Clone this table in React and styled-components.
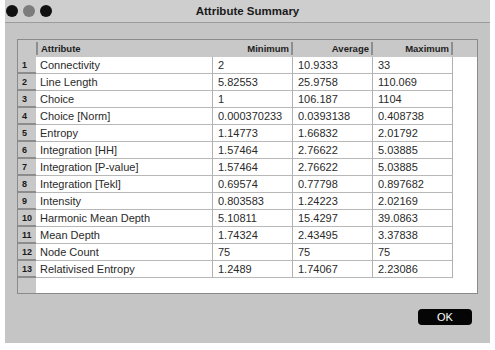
import React from 'react'
import styled, { createGlobalStyle } from 'styled-components'

const GlobalStyle = createGlobalStyle`
  html, body {
    margin: 0;
    padding: 0;
    background: #ffffff;
    font-family: "Liberation Sans", Arial, sans-serif;
  }
`

const Window = styled.div`
  margin-left: 5px;
  width: 485px;
  height: 343px;
  background-color: #c5c5c5;
  display: flex;
  flex-direction: column;
`
const TitleBar = styled.div`
  position: relative;
  height: 22px;
  flex-shrink: 0;
  background-color: #cecece;
  border-bottom: 1px solid #9c9c9c;
  display: flex;
  align-items: center;
  justify-content: center;
`
const Lights = styled.div`
  position: absolute;
  left: 1px;
  top: 5px;
  display: flex;
  gap: 5px;
`
const Light = styled.span`
  width: 12px;
  height: 12px;
  border-radius: 50%;
  background-color: ${p => (p.dim ? '#7c7c7c' : '#111')};
`
const Title = styled.div`
  font-size: 11.5px;
  font-weight: 700;
  color: #1a1a1a;
`
const Body = styled.div`
  flex: 1;
  display: flex;
  flex-direction: column;
  padding: 16px 12px 0 12px;
`
const Table = styled.div`
  width: 459px;
  height: 253px;
  border: 1px solid #8a8a8a;
  background-color: #fff;
  display: grid;
  grid-template-columns: 18px 177px 80px 80px 80px 24px;
  grid-template-rows: 17px repeat(13, 17px) 1fr;
`
const HeadCell = styled.div`
  background-color: #c8c8c8;
  font-size: 9.5px;
  font-weight: 700;
  color: #1e1e1e;
  display: flex;
  align-items: center;
  justify-content: ${p => (p.right ? 'flex-end' : 'flex-start')};
  padding: 0 4px 0 ${p => (p.sepLeft ? '5px' : '4px')};
  position: relative;
  &::after {
    content: '';
    display: ${p => (p.sep ? 'block' : 'none')};
    position: absolute;
    ${p => (p.sepLeft ? 'left: 0;' : 'right: 0;')}
    top: 2px;
    bottom: 2px;
    width: 2px;
    background-color: #8e8e8e;
  }
`
const NumCell = styled.div`
  background-color: #c8c8c8;
  border-bottom: ${p => (p.last ? 'none' : '2px solid #8c8c8c')};
  font-size: 9px;
  font-weight: 700;
  color: #1a1a1a;
  display: flex;
  align-items: center;
  padding-left: 4px;
`
const Cell = styled.div`
  font-size: 11px;
  color: #2a2a2a;
  display: flex;
  align-items: center;
  padding-left: ${p => (p.first ? '4px' : '5px')};
  border-bottom: 1px solid #b8b8b8;
  border-right: 1px solid #b0b0b0;
  white-space: nowrap;
  overflow: hidden;
`
const Blank = styled.div`
  background-color: #fff;
`
const Footer = styled.div`
  display: flex;
  justify-content: flex-end;
  padding: 15px 6px 0 0;
`
const OkButton = styled.button`
  width: 54px;
  height: 16px;
  border: none;
  border-radius: 4px;
  background-color: #050505;
  color: #fff;
  font-family: "Liberation Sans", Arial, sans-serif;
  font-size: 11px;
  padding: 0;
`

const rows = [
  ['Connectivity', '2', '10.9333', '33'],
  ['Line Length', '5.82553', '25.9758', '110.069'],
  ['Choice', '1', '106.187', '1104'],
  ['Choice [Norm]', '0.000370233', '0.0393138', '0.408738'],
  ['Entropy', '1.14773', '1.66832', '2.01792'],
  ['Integration [HH]', '1.57464', '2.76622', '5.03885'],
  ['Integration [P-value]', '1.57464', '2.76622', '5.03885'],
  ['Integration [Tekl]', '0.69574', '0.77798', '0.897682'],
  ['Intensity', '0.803583', '1.24223', '2.02169'],
  ['Harmonic Mean Depth', '5.10811', '15.4297', '39.0863'],
  ['Mean Depth', '1.74324', '2.43495', '3.37838'],
  ['Node Count', '75', '75', '75'],
  ['Relativised Entropy', '1.2489', '1.74067', '2.23086'],
]

const App = () => {
  return (
    <>
      <GlobalStyle />
      <Window>
        <TitleBar>
          <Lights>
            <Light />
            <Light dim />
            <Light />
          </Lights>
          <Title>Attribute Summary</Title>
        </TitleBar>
        <Body>
          <Table>
            <HeadCell />
            <HeadCell sep sepLeft>Attribute</HeadCell>
            <HeadCell right sep>Minimum</HeadCell>
            <HeadCell right sep>Average</HeadCell>
            <HeadCell right sep>Maximum</HeadCell>
            <HeadCell />
            {rows.map((r, i) => (
              <React.Fragment key={r[0]}>
                <NumCell>{i + 1}</NumCell>
                <Cell first>{r[0]}</Cell>
                <Cell>{r[1]}</Cell>
                <Cell>{r[2]}</Cell>
                <Cell>{r[3]}</Cell>
                <Blank />
              </React.Fragment>
            ))}
            <NumCell last />
            <Blank />
            <Blank />
            <Blank />
            <Blank />
            <Blank />
          </Table>
          <Footer>
            <OkButton>OK</OkButton>
          </Footer>
        </Body>
      </Window>
    </>
  )
}

export default App
